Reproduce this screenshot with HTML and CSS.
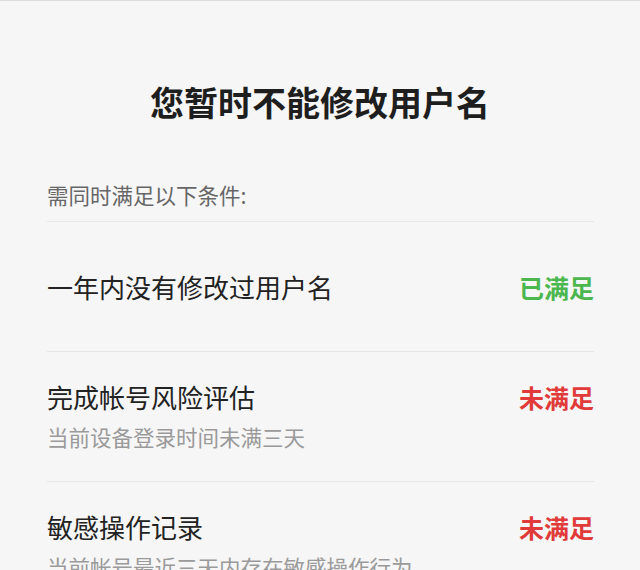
FILE: index.html
```html
<!DOCTYPE html>
<html lang="zh-CN">
<head>
    <meta charset="UTF-8">
    <meta name="viewport" content="width=device-width, initial-scale=1.0">
    <title>修改用户名</title>
    <link rel="stylesheet" href="styles.css">
</head>
<body>
    <h1 class="title">您暂时不能修改用户名</h1>

    <div class="conditions">
        <p class="intro">需同时满足以下条件:</p>

        <div class="row">
            <div class="head">
                <span class="name">一年内没有修改过用户名</span>
                <span class="status ok">已满足</span>
            </div>
        </div>

        <div class="row">
            <div class="head">
                <span class="name">完成帐号风险评估</span>
                <span class="status fail">未满足</span>
            </div>
            <p class="desc">当前设备登录时间未满三天</p>
        </div>

        <div class="row">
            <div class="head">
                <span class="name">敏感操作记录</span>
                <span class="status fail">未满足</span>
            </div>
            <p class="desc">当前帐号最近三天内存在敏感操作行为</p>
        </div>
    </div>
</body>
</html>
```

FILE: styles.css
```css
body {
    font-family: "Noto Sans CJK SC", "Noto Sans", sans-serif;
    background-color: #f6f6f6;
    color: #222;
    margin: 0;
    border-top: 1px solid #dcdcdc;
}

.title {
    margin: 0;
    padding-top: 77px;
    font-size: 34px;
    line-height: 48px;
    font-weight: 700;
    text-align: center;
    color: #1e1e1e;
}

.conditions {
    margin: 0 46px 0 47px;
}

.intro {
    margin: 54px 0 0;
    padding-bottom: 11px;
    font-size: 21.5px;
    line-height: 30px;
    color: #666;
    border-bottom: 1px solid #e6e6e6;
}

.row {
    display: flex;
    flex-direction: column;
    justify-content: center;
    min-height: 129px;
    border-bottom: 1px solid #e6e6e6;
}

.head {
    display: flex;
    justify-content: space-between;
    align-items: center;
}

.name {
    font-size: 26px;
    line-height: 38px;
    color: #222;
}

.status {
    font-size: 25px;
    line-height: 38px;
    font-weight: 700;
}

.status.ok {
    color: #4cb64f;
}

.status.fail {
    color: #e03a3a;
}

.desc {
    margin: 2px 0 0;
    font-size: 21.5px;
    line-height: 38px;
    color: #9a9a9a;
}
```
